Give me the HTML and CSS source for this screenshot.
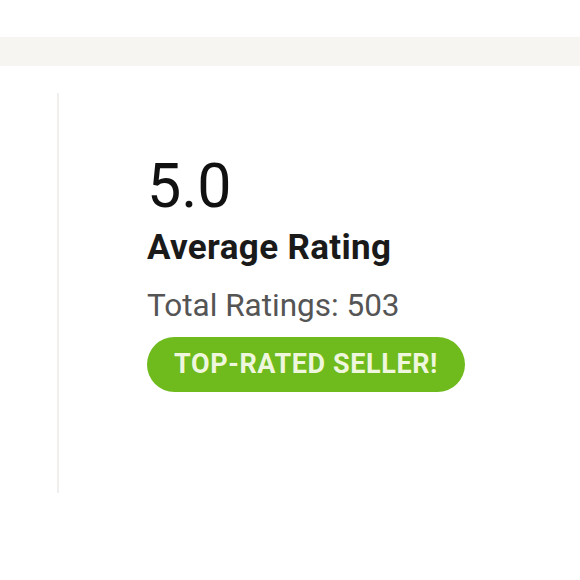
FILE: index.html
```html
<!DOCTYPE html>
<html>
<head>
<meta charset="utf-8">
<link rel="stylesheet" href="styles.css">
</head>
<body>
<div class="topband"></div>
<div class="main">
  <div class="divider"></div>
  <div class="summary">
    <div class="score">5.0</div>
    <div class="label">Average Rating</div>
    <div class="total">Total Ratings: 503</div>
    <div class="badge">TOP-RATED SELLER!</div>
  </div>
</div>
</body>
</html>
```
FILE: styles.css
```css
html, body {
  margin: 0;
  padding: 0;
  background: #ffffff;
  font-family: Roboto, "Liberation Sans", sans-serif;
}
.topband {
  margin-top: 37px;
  height: 29px;
  background: #f6f5f2;
}
.main {
  display: flex;
  padding-top: 27px;
  padding-left: 57px;
}
.divider {
  width: 2px;
  height: 400px;
  background: #f0efed;
}
.summary {
  display: flex;
  flex-direction: column;
  align-items: flex-start;
  padding-left: 88px;
  padding-top: 57px;
}
.score {
  font-size: 61px;
  line-height: 72px;
  color: #111;
  font-weight: 400;
}
.label {
  font-size: 35px;
  font-weight: 700;
  color: #1a1a1a;
  line-height: 40px;
  margin-top: 6px;
  letter-spacing: 0.35px;
}
.total {
  font-size: 31.5px;
  color: #555;
  line-height: 36px;
  margin-top: 20px;
}
.badge {
  margin-top: 13px;
  background: #6fba1c;
  color: #eef7dd;
  font-weight: 700;
  font-size: 27px;
  line-height: 55px;
  height: 55px;
  padding: 0 27px;
  border-radius: 28px;
  letter-spacing: 0.6px;
}
```
